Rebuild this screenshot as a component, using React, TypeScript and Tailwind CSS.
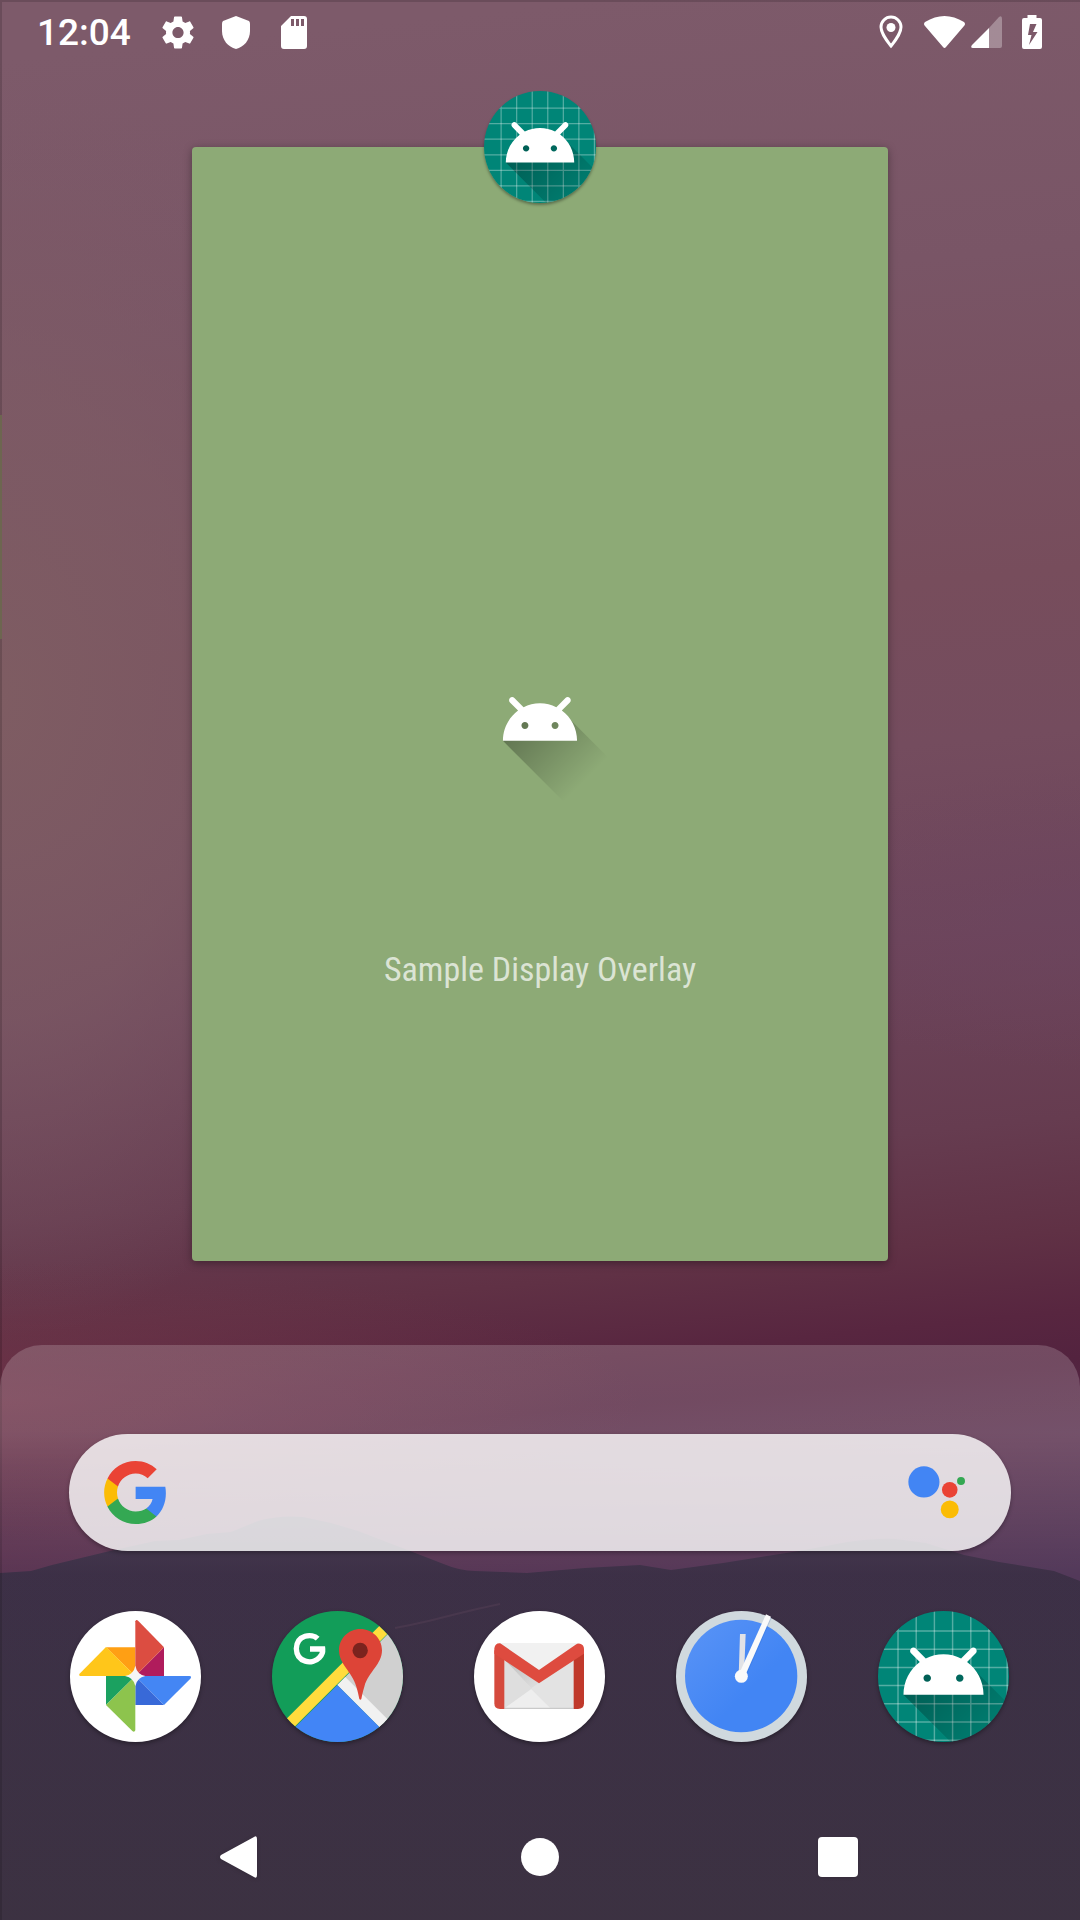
import React from "react";

const HEAD =
  "M66.94,46.02C72.44,50.07 76,56.61 76,64L32,64C32,56.61 35.56,50.11 40.98,46.06L36.18,41.19C35.45,40.45 35.45,39.3 36.18,38.56C36.91,37.81 38.05,37.81 38.78,38.56L44.25,44.05C47.18,42.57 50.48,41.71 54,41.71C57.48,41.71 60.78,42.57 63.68,44.05L69.11,38.56C69.84,37.81 70.98,37.81 71.71,38.56C72.44,39.3 72.44,40.45 71.71,41.19L66.94,46.02ZM62.94,56.92C64.08,56.92 65,56.01 65,54.88C65,53.76 64.08,52.85 62.94,52.85C61.8,52.85 60.88,53.76 60.88,54.88C60.88,56.01 61.8,56.92 62.94,56.92ZM45.06,56.92C46.2,56.92 47.13,56.01 47.13,54.88C47.13,53.76 46.2,52.85 45.06,52.85C43.92,52.85 43,53.76 43,54.88C43,56.01 43.92,56.92 45.06,56.92Z";
const HEAD_SHADOW =
  "M32,64C32,64 38.39,52.99 44.13,50.95C51.37,48.37 70.14,49.57 70.14,49.57L108.26,87.69L108,109.01L75.97,107.97L32,64Z";

function AndroidHead({ id }: { id: string }) {
  return (
    <>
      <defs>
        <linearGradient id={id} gradientUnits="userSpaceOnUse" x1="42.95" y1="49.6" x2="81" y2="87.6">
          <stop offset="0" stopColor="#000" stopOpacity="0.32" />
          <stop offset="1" stopColor="#000" stopOpacity="0" />
        </linearGradient>
      </defs>
      <path d={HEAD_SHADOW} fill={`url(#${id})`} />
      <path d={HEAD} fill="#fff" fillRule="evenodd" />
    </>
  );
}

function LauncherIcon({ id }: { id: string }) {
  const lines = [29, 39, 49, 59, 69, 79, 89];
  return (
    <svg viewBox="18 18 72 72" className="block size-full" aria-hidden="true">
      <defs>
        <clipPath id={`${id}-clip`}>
          <circle cx="54" cy="54" r="36" />
        </clipPath>
        <linearGradient id={`${id}-shade`} gradientUnits="userSpaceOnUse" x1="42.95" y1="49.6" x2="85.85" y2="92.5">
          <stop offset="0" stopColor="#000" stopOpacity="0.3" />
          <stop offset="1" stopColor="#000" stopOpacity="0.02" />
        </linearGradient>
      </defs>
      <g clipPath={`url(#${id}-clip)`}>
        <rect x="18" y="18" width="72" height="72" fill="#008577" />
        {lines.map((n) => (
          <path key={n} d={`M${n},0V108M0,${n}H108`} stroke="#fff" strokeOpacity="0.33" strokeWidth="0.8" />
        ))}
        <path d={HEAD_SHADOW} fill={`url(#${id}-shade)`} />
        <path d={HEAD} fill="#fff" fillRule="evenodd" />
      </g>
    </svg>
  );
}

function PhotosIcon() {
  return (
    <svg viewBox="60 63 393 393" className="block size-full" aria-hidden="true">
      <circle cx="256.500" cy="259.500" r="196.500" fill="#fff" />
      <path d="M256 172H168L256 258Z" fill="#ff9f14" />
      <path d="M168 171L88 252Q86 258 93 258H256Z" fill="#ffc61a" />
      <path d="M342 172V258H256Z" fill="#b01c5c" />
      <path d="M256 258V94Q259 87 265 93L342 172Z" fill="#dc4d41" />
      <path d="M256 258L342 345H256Z" fill="#3869d8" />
      <path d="M256 258H418Q427 259 421 266L342 345Z" fill="#4486f4" />
      <path d="M168 258H256L168 345Z" fill="#1ba160" />
      <path d="M256 258V421Q253 428 247 423L168 345Z" fill="#8dc44d" />
      <path d="M256 227Q261 253 286 258Q261 263 256 288Q251 263 225 258Q251 253 256 227Z" fill="#f5f5f5" />
    </svg>
  );
}

function MapsIcon() {
  return (
    <svg viewBox="666 63 393 393" className="block size-full" aria-hidden="true">
      <defs>
        <clipPath id="maps-clip">
          <circle cx="862.500" cy="259.500" r="196.500" />
        </clipPath>
      </defs>
      <g clipPath="url(#maps-clip)">
        <rect x="666" y="63" width="393" height="393" fill="#129d59" />
        <path d="M1060 85L862 285L1060 483Z" fill="#d0d0d0" />
        <path d="M862 285L886 261L1030 405L1006 429Z" fill="#f1f1f1" />
        <path d="M862 285L660 487H1064Z" fill="#4285f6" />
        <path d="M988 108L700 396L724 420L1012 132Z" fill="#ffdc3d" />
      </g>
      <path
        d="M803 146C786 129 740 134 739 176C740 218 787 225 808 203C816 195 819 186 818 177H780"
        fill="none"
        stroke="#fff"
        strokeWidth="16"
      />
      <path
        d="M931 117C895 117 867 146 867 181C867 223 906 245 919 290C924 306 926 317 928 327Q931 332 934 327C936 317 938 306 943 290C956 245 996 223 996 181C996 146 967 117 931 117Z"
        fill="#dd4437"
      />
      <circle cx="930.500" cy="181.500" r="23" fill="#7b231e" />
    </svg>
  );
}

function GmailIcon() {
  return (
    <svg viewBox="42 63 393 393" className="block size-full" aria-hidden="true">
      <defs>
        <linearGradient id="gmail-fold" x1="0" y1="0" x2="1" y2="1">
          <stop offset="0" stopColor="#bdbdbd" />
          <stop offset="1" stopColor="#e0e0e0" />
        </linearGradient>
      </defs>
      <circle cx="238.500" cy="259.500" r="196.500" fill="#fff" />
      <rect x="120" y="159" width="234" height="198" fill="#e4e4e4" />
      <path d="M133 208L272 357H133Z" fill="#dedede" />
      <path d="M133 208L214 295L237 279Z" fill="url(#gmail-fold)" />
      <path d="M133 355L214 297L272 355Z" fill="#eeeeee" />
      <path d="M214 297L237 279L341 208V355H272Z" fill="#e3e3e3" />
      <path d="M120 159H354L237 240Z" fill="#f1f1f1" />
      <path d="M133 353H341V357H133Z" fill="#c9c9c9" />
      <path d="M103 180L133 208V357H120Q103 357 103 340Z" fill="#d54a3d" />
      <path d="M372 180L341 208V357H354Q372 357 372 340Z" fill="#c0392b" />
      <path
        d="M103 191V175Q106 159 120 160L125 163L237 240L349 163Q354 159 360 161Q372 164 372 177V191L237 280Z"
        fill="#de4b3f"
      />
    </svg>
  );
}

function ClockIcon() {
  return (
    <svg viewBox="648 63 393 393" className="block size-full" aria-hidden="true">
      <defs>
        <linearGradient id="clock-face" x1="0" y1="0" x2="1" y2="1">
          <stop offset="0" stopColor="#5a94f6" />
          <stop offset="0.600" stopColor="#4285f4" />
        </linearGradient>
      </defs>
      <circle cx="844.500" cy="259.500" r="196.500" fill="#d0d9de" />
      <circle cx="843.500" cy="258" r="168.500" fill="url(#clock-face)" />
      <path d="M840 132H857L852 258H836Z" fill="#e1e2e6" />
      <path d="M928 79L850 258" stroke="#1d56b8" strokeOpacity="0.18" strokeWidth="16" />
      <path d="M918 73L933 80L855 258L838 250Z" fill="#fafafa" />
      <circle cx="844" cy="259" r="19.500" fill="#fafafa" />
    </svg>
  );
}

function GoogleLogo() {
  return (
    <svg viewBox="1 1 21.560 22" className="h-[63px] w-[62px]" aria-hidden="true">
      <path fill="#4285F4" d="M22.56 12.25c0-.78-.07-1.530-.2-2.250H12v4.260h5.920c-.26 1.370-1.040 2.530-2.210 3.310v2.770h3.570c2.080-1.920 3.280-4.740 3.280-8.090z" />
      <path fill="#34A853" d="M12 23c2.970 0 5.460-.98 7.280-2.660l-3.570-2.770c-.98.66-2.230 1.060-3.710 1.060-2.860 0-5.290-1.930-6.160-4.530H2.180v2.840C3.990 20.530 7.700 23 12 23z" />
      <path fill="#FBBC05" d="M5.840 14.090c-.22-.66-.35-1.360-.35-2.090s.13-1.430.35-2.090V7.070H2.180C1.430 8.550 1 10.220 1 12s.43 3.450 1.180 4.930l3.660-2.840z" />
      <path fill="#EA4335" d="M12 5.380c1.620 0 3.060.56 4.210 1.640l3.150-3.150C17.450 2.090 14.970 1 12 1 7.700 1 3.990 3.470 2.180 7.070l3.660 2.840c.87-2.600 3.300-4.530 6.160-4.530z" />
    </svg>
  );
}

function Wallpaper() {
  return (
    <svg
      viewBox="0 0 1080 1920"
      preserveAspectRatio="none"
      className="absolute inset-0 size-full"
      aria-hidden="true"
    >
      <defs>
        <linearGradient id="sky" gradientUnits="userSpaceOnUse" x1="600" y1="0" x2="760" y2="1600">
          <stop offset="0" stopColor="#7d5a6a" />
          <stop offset="0.180" stopColor="#795566" />
          <stop offset="0.380" stopColor="#774d5c" />
          <stop offset="0.480" stopColor="#744c5e" />
          <stop offset="0.600" stopColor="#6d455b" />
          <stop offset="0.720" stopColor="#663c50" />
          <stop offset="0.790" stopColor="#603145" />
          <stop offset="0.840" stopColor="#582640" />
          <stop offset="0.870" stopColor="#53233f" />
          <stop offset="0.920" stopColor="#562c4a" />
          <stop offset="1" stopColor="#4c3153" />
        </linearGradient>
        <radialGradient id="glow" gradientUnits="userSpaceOnUse" cx="0" cy="0" r="1" gradientTransform="translate(0 700) scale(420 640)">
          <stop offset="0" stopColor="#7f5e63" stopOpacity="0.9" />
          <stop offset="0.500" stopColor="#7e5c65" stopOpacity="0.65" />
          <stop offset="1" stopColor="#7d5a66" stopOpacity="0" />
        </radialGradient>
        <radialGradient id="rose" gradientUnits="userSpaceOnUse" cx="0" cy="0" r="1" gradientTransform="translate(0 1400) scale(640 140)">
          <stop offset="0" stopColor="#743549" stopOpacity="0.65" />
          <stop offset="1" stopColor="#743549" stopOpacity="0" />
        </radialGradient>
        <radialGradient id="violet" gradientUnits="userSpaceOnUse" cx="0" cy="0" r="1" gradientTransform="translate(1080 920) scale(330 150)">
          <stop offset="0" stopColor="#6c455f" stopOpacity="0.6" />
          <stop offset="1" stopColor="#6c455f" stopOpacity="0" />
        </radialGradient>
        <linearGradient id="hills" x1="0" y1="0" x2="0" y2="1">
          <stop offset="0" stopColor="#352740" />
          <stop offset="0.400" stopColor="#34283d" />
          <stop offset="1" stopColor="#34293a" />
        </linearGradient>
      </defs>
      <rect width="1080" height="1920" fill="url(#sky)" />
      <rect width="1080" height="1920" fill="url(#glow)" />
      <rect width="1080" height="1920" fill="url(#violet)" />
      <rect width="1080" height="1920" fill="url(#rose)" />
      <path
        d="M0 1573L31 1571L52 1565L110 1551L155 1541L179 1540L207 1534L231 1532L258 1521Q279 1515 303 1517L331 1523L358 1531L410 1551L441 1563Q460 1571 475 1571L527 1573L585 1568L640 1565L671 1570L723 1563L799 1551L847 1542Q880 1538 895 1539L926 1543L964 1555L999 1562L1054 1571L1080 1581V1920H0Z"
        fill="url(#hills)"
      />
      <path d="M395 1628C430 1622 460 1612 500 1604" stroke="#5a4057" strokeOpacity="0.35" strokeWidth="2" fill="none" />
    </svg>
  );
}

const apps = [
  { name: "Photos", icon: <PhotosIcon /> },
  { name: "Maps", icon: <MapsIcon /> },
  { name: "Gmail", icon: <GmailIcon /> },
  { name: "Clock", icon: <ClockIcon /> },
  { name: "Sample Display Overlay", icon: <LauncherIcon id="dock-app" /> },
];

export default function App() {
  return (
    <div className="relative isolate flex min-h-screen flex-col overflow-hidden bg-[#6d455b] font-['Roboto',sans-serif]">
      <Wallpaper />
      <div className="absolute inset-0 border-t-2 border-l-2 border-black/15" />
      <div className="absolute top-[415px] left-0 h-[224px] w-0.5 bg-[#6d6650]" />

      <header className="relative flex h-16 items-center justify-between pr-[38px] pl-[37px] text-white">
        <div className="flex items-center">
          <time className="w-[125px] text-[37px] leading-none font-medium">12:04</time>
          <svg viewBox="2 2 20 20" className="mr-7 h-[33px] w-8" fill="currentColor" aria-label="Settings">
            <path d="M19.430 12.980c.04-.32.07-.64.07-.98s-.03-.66-.07-.98l2.110-1.650c.19-.15.24-.42.12-.64l-2-3.460c-.12-.22-.39-.3-.61-.22l-2.490 1c-.52-.4-1.080-.73-1.690-.98l-.38-2.650C14.460 2.180 14.250 2 14 2h-4c-.25 0-.46.18-.49.42l-.38 2.650c-.61.25-1.170.59-1.690.98l-2.490-1c-.23-.09-.49 0-.61.22l-2 3.460c-.13.22-.07.49.12.64l2.110 1.650c-.04.32-.07.65-.07.98s.03.66.07.98l-2.110 1.650c-.19.15-.24.42-.12.64l2 3.460c.12.22.39.3.61.22l2.490-1c.52.4 1.080.73 1.690.98l.38 2.650c.03.24.24.42.49.42h4c.25 0 .46-.18.49-.42l.38-2.650c.61-.25 1.170-.59 1.690-.98l2.490 1c.23.09.49 0 .61-.22l2-3.460c.12-.22.07-.49-.12-.64l-2.110-1.650zM12 15.500c-1.930 0-3.500-1.570-3.500-3.500s1.570-3.500 3.500-3.500 3.500 1.570 3.500 3.500-1.570 3.500-3.500 3.500z" />
          </svg>
          <svg viewBox="0 0 28 33" className="mr-[31px] h-[33px] w-7" fill="currentColor" aria-label="Security">
            <path d="M14 0L27 5Q28 6 28 8V15C28 24 22 31 14 33C6 31 0 24 0 15V8Q0 6 1 5Z" />
          </svg>
          <svg viewBox="0 0 26 33" className="h-[33px] w-[26px]" fill="currentColor" fillRule="evenodd" aria-label="SD card">
            <path d="M10 0H23Q26 0 26 3V30Q26 33 23 33H3Q0 33 0 30V10ZM10 3V10H13V3ZM15 3V10H18V3ZM20 3V10H23V3Z" />
          </svg>
        </div>
        <div className="flex items-center">
          <svg viewBox="0 0 24 34" className="mr-[21px] h-[34px] w-6" aria-label="Location">
            <path d="M12 2C6.500 2 2 6.500 2 12C2 19 12 31 12 31S22 19 22 12C22 6.500 17.500 2 12 2Z" fill="none" stroke="currentColor" strokeWidth="3" />
            <circle cx="12" cy="12.500" r="4.500" fill="currentColor" />
          </svg>
          <svg viewBox="0 0 41 33" className="mr-1.5 h-[33px] w-[41px]" fill="currentColor" aria-label="Wi-Fi">
            <path d="M1 6Q20.500 -6 40 6Q42 8 40 10L22 31Q20.500 33 19 31L1 10Q-1 8 1 6Z" />
          </svg>
          <svg viewBox="0 0 31 32" className="mr-5 h-8 w-[31px]" fill="currentColor" aria-label="Mobile signal">
            <path d="M18 12L28 1Q31 -1 31 3V30Q31 32 29 32H18Z" opacity="0.300" />
            <path d="M18 12V32H2Q-1 32 1 29Z" />
          </svg>
          <svg viewBox="0 0 20 34" className="h-[34px] w-5" fill="currentColor" fillRule="evenodd" aria-label="Battery charging">
            <path d="M5.500 0H14.500V3H18Q20 3 20 5V32Q20 34 18 34H2Q0 34 0 32V5Q0 3 2 3H5.500ZM8 9L6 20H9.500L7 30L15.500 17H11L14.500 9Z" />
          </svg>
        </div>
      </header>

      <main className="relative mt-[83px] mb-[84px] flex w-[64.500%] flex-1 flex-col items-center justify-center gap-[130px] self-center rounded-[4px] bg-[#8daa76] pt-[218px] shadow-[0_2px_8px_rgba(0,0,0,0.35)]">
        <button
          type="button"
          aria-label="App options"
          className="absolute -top-14 left-1/2 size-28 -translate-x-1/2 rounded-full shadow-[0_2px_3px_rgba(0,0,0,0.35)]"
        >
          <LauncherIcon id="card-app" />
        </button>
        <svg viewBox="0 0 108 108" className="size-[182px]" aria-hidden="true">
          <AndroidHead id="card-shade" />
        </svg>
        <h1 className="font-['Roboto_Condensed','Roboto',sans-serif] text-[34px] leading-[48px] text-white/70">
          Sample Display Overlay
        </h1>
      </main>

      <footer className="relative flex flex-col rounded-t-[42px] bg-linear-to-b from-white/18 from-15% to-white/4 to-40% pt-[89px]">
        <form role="search" className="mx-[6.400%] flex h-[117px] items-center rounded-full bg-white/80 pr-[45px] pl-[35px] shadow-[0_2px_4px_rgba(0,0,0,0.3)]">
          <button type="button" aria-label="Google">
            <GoogleLogo />
          </button>
          <input type="search" aria-label="Search" className="h-full min-w-0 flex-1 bg-transparent px-6 text-[36px] text-[#333] outline-none" />
          <button type="button" aria-label="Assistant">
            <svg viewBox="144 133 175 160" className="h-[53px] w-[58px]" aria-hidden="true">
              <circle cx="192" cy="181" r="47" fill="#4285f4" />
              <circle cx="270" cy="205" r="23.500" fill="#ea4335" />
              <circle cx="270" cy="264" r="27" fill="#fbbc05" />
              <circle cx="304" cy="178" r="12" fill="#34a853" />
            </svg>
          </button>
        </form>
        <nav aria-label="Favorite apps" className="mt-[60px] flex justify-between pr-[6.600%] pl-[6.500%]">
          {apps.map((app) => (
            <button
              key={app.name}
              type="button"
              aria-label={app.name}
              className="size-[131px] rounded-full shadow-[0_2px_4px_rgba(0,0,0,0.35)]"
            >
              {app.icon}
            </button>
          ))}
        </nav>
        <nav aria-label="System" className="mt-[51px] flex h-[127px] items-center justify-center gap-[218px]">
          <button type="button" aria-label="Back" className="grid size-20 place-items-center">
            <svg viewBox="0 0 46 44" className="h-11 w-[46px] drop-shadow-sm" fill="#fff" aria-hidden="true">
              <path d="M35 2Q38 0 38 4V40Q38 44 35 42L2 24Q0 22 2 20Z" />
            </svg>
          </button>
          <button type="button" aria-label="Home" className="grid size-20 place-items-center">
            <span className="size-[38px] rounded-full bg-white" />
          </button>
          <button type="button" aria-label="Recent apps" className="grid size-20 place-items-center">
            <span className="size-10 rounded bg-white shadow-sm" />
          </button>
        </nav>
      </footer>
    </div>
  );
}
